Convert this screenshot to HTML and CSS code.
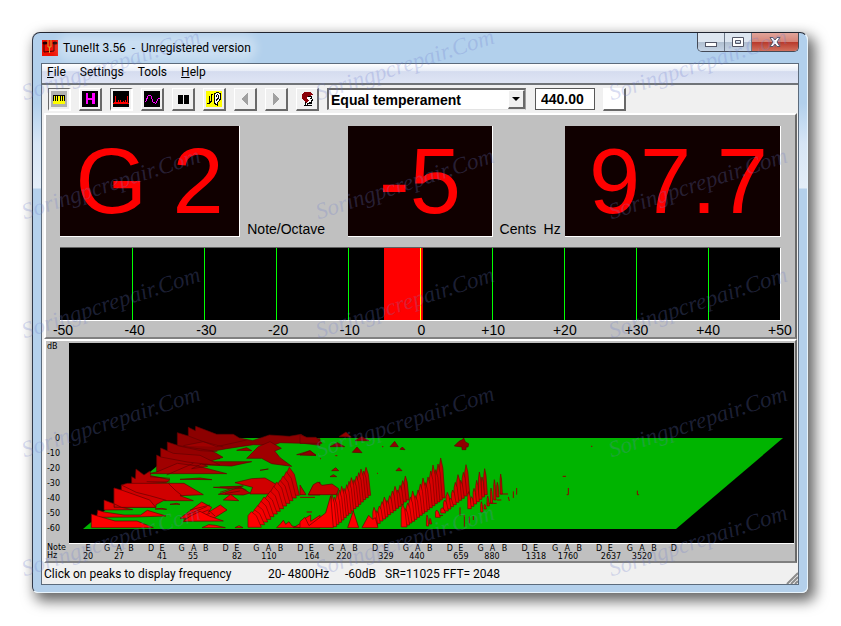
FILE: index.html
```html
<!DOCTYPE html>
<html lang="en">
  <head>
    <meta charset="UTF-8" />
    <meta name="viewport" content="width=device-width, initial-scale=1" />
    <title>Tune!It 3.56</title>
    <link rel="stylesheet" href="styles.css">
  </head>
  <body>
    <div class="window">
      <header class="titlebar">
        <svg class="app-icon" viewBox="0 0 16 16">
          <rect width="16" height="16" fill="#f01000" />
          <path d="M2 3v9l10-1V3" fill="none" stroke="#400" />
          <ellipse cx="3" cy="3" rx="2.500" ry="1.500" fill="#200" />
          <ellipse cx="13" cy="3" rx="2.500" ry="1.500" fill="#200" />
          <path d="M6 0v7h3V0M7.500 7v6" fill="none" stroke="#d0a030" />
        </svg>
        <h1>Tune!It 3.56 &nbsp;- &nbsp;Unregistered version</h1>
        <div class="window-buttons">
          <button type="button" aria-label="Minimize">
            <svg width="12" height="12"><rect x="0.5" y="6.5" width="11" height="4" fill="#fff" stroke="#535666" /></svg>
          </button>
          <button type="button" aria-label="Maximize">
            <svg width="12" height="12"><path fill="#fff" stroke="#535666" fill-rule="evenodd" d="M.5 1.500h11v9H.5zM3.500 4.500h5v3h-5z" /></svg>
          </button>
          <button type="button" class="close" aria-label="Close">
            <svg width="12" height="12"><path d="M1 1.500h3l2 2.500 2-2.500h3L8 6l3 4.500H8L6 8l-2 2.500H1L4 6z" fill="#fff" stroke="#535666" /></svg>
          </button>
        </div>
      </header>

      <main class="client">
        <nav class="menubar">
          <a href="#file"><u>F</u>ile</a>
          <a href="#settings">Settings</a>
          <a href="#tools">Tools</a>
          <a href="#help"><u>H</u>elp</a>
        </nav>

        <div class="toolbar">
          <div class="tools">
            <button type="button" class="tool pressed" aria-label="Keyboard">
              <svg viewBox="0 0 16 16"><path fill="#b0b0b0" d="M0 0h16v16H0z" /><path fill="#ff0" d="M2 4h12v9H2z" /><path d="M2 4h12v1H2zM4 4h1v6H4zM6 4h1v6H6zM9 4h1v6H9zM11 4h1v6h-1zM2 4h1v6H2zM13 4h1v6h-1z" /></svg>
            </button>
            <button type="button" class="tool" aria-label="Harmonics">
              <svg viewBox="0 0 16 16"><path d="M0 0h16v16H0z" /><path fill="#f0f" d="M4 2h2v5h4V2h3v11h-3V9H6v4H4z" /></svg>
            </button>
            <button type="button" class="tool pressed" aria-label="Spectrum">
              <svg viewBox="0 0 16 16"><path d="M0 0h16v16H0z" /><path fill="#f00" d="M0 13v-1h1v-1h1V5h1v6h2V9h1v2h1V9h1v2h2v-1h1v1h1V9h1v2h1V5h1v7h1v1z" /></svg>
            </button>
            <button type="button" class="tool" aria-label="Waveform">
              <svg viewBox="0 0 16 16"><path d="M0 0h16v16H0z" /><path fill="none" stroke="#f0f" d="M1 10h1l2-5 1-1h1l1 1 2 6 2 1h1l2-4 1-1h1" /></svg>
            </button>
            <button type="button" class="tool" aria-label="Pause">
              <svg viewBox="0 0 16 16"><path d="M3 4h5v9H3zM9 4h5v9H9z" /></svg>
            </button>
            <button type="button" class="tool" aria-label="Listen">
              <svg viewBox="0 0 16 16"><path fill="#ff0" d="M0 0h16v16H0z" /><path fill="none" stroke="#000" d="M1 12h2V9m2-6v7M3 5v4m2-6l2 1M3 12l3-2" /><path fill="#fff" stroke="#000" d="M8 6c0-6 7-6 7 0 0 4-4 3-4 8L8 12l1-4z" /><path fill="none" stroke="#000" d="M10 6c0-3 3-3 3 0s-3 1-2 4" /></svg>
            </button>
            <button type="button" class="tool" aria-label="Previous">
              <svg viewBox="0 0 16 16"><path fill="#a0a0a0" d="M11 2v12L4 8z" /></svg>
            </button>
            <button type="button" class="tool" aria-label="Next">
              <svg viewBox="0 0 16 16"><path fill="#a0a0a0" d="M5 2v12l7-6z" /></svg>
            </button>
            <button type="button" class="tool" aria-label="Player">
              <svg viewBox="0 0 16 16"><path fill="#fff" stroke="#000" d="M6 5h7l-1 2 2 2-2 1v2H8v2H6V9z" /><path fill="#8b0008" d="M3 3l2-2h7l2 3-4 1-2 1v2l2 1-3 3-2-2-2-2z" /><path stroke="#000" d="M11 7.500h2M10 11.500h3M5 14.500h8" /></svg>
            </button>
          </div>
          <div class="combo">
            <select aria-label="Temperament">
              <option>Equal temperament</option>
            </select>
            <span class="combo-arrow"></span>
          </div>
          <input class="pitch" type="text" value="440.00" aria-label="Reference pitch" />
          <button type="button" class="tool blank" aria-label="Set pitch"></button>
        </div>

        <section class="panel tuner">
          <div class="readouts">
            <output class="readout">G 2</output>
            <div class="units"><span>Note/Octave</span></div>
            <output class="readout">-5</output>
            <div class="units"><span>Cents</span><span>Hz</span></div>
            <output class="readout hertz">97.7</output>
          </div>
          <svg class="meter" id="meter"></svg>
          <div class="meter-labels">
            <span>-50</span><span>-40</span><span>-30</span><span>-20</span><span>-10</span><span>0</span><span>+10</span><span>+20</span><span>+30</span><span>+40</span><span>+50</span>
          </div>
        </section>

        <section class="panel spectrum">
          <div class="db-scale">
            <span class="db-title">dB</span>
            <span>0</span><span>-10</span><span>-20</span><span>-30</span><span>-40</span><span>-50</span><span>-60</span>
          </div>
          <svg class="plot" viewBox="0 0 725 200" preserveAspectRatio="none">
            <path fill="#00b400" d="M14 186L121 95H714L607 186z" />
            <!-- low frequencies, back to front -->
            <g transform="translate(-29 77) scale(0.33333)" stroke="#600000" stroke-width="2">
              <path fill="#8c0000" d="M412 115V38l33 10V22l21 10 1-13 63 24h50l18 11 40 8 50-17 60 4 35-6 20 13h37v20l-50-6-70-2-20 8-60-2-80 12-45 8 25 22z" />
              <path fill="#940000" d="M382 130V66l30 10 35 6 68 10 34 20-44 13h130l-60 13z" />
              <path fill="#a00000" d="M620 115l35-35 35-15 34 20-20 8 16 20 35 26-60-8-30-16z" />
              <path fill="#a00000" d="M350 155v-50l12 6V84l38 16 80 6 60 29-42-2-60 12z" />
              <path fill="#a00000" d="M770 104l40-12 18 14zM590 91l30-8 15 9zM430 77l60-12 60 16" />
              <path fill="#ac0000" d="M325 161l25-5 62-26 60 8 88 23zM455 146l30-14 18 7zM660 151l25-4z" />
              <path fill="#b80000" d="M275 192v-22l11 6 2-29 24 18 18-12 2 14 58 12-10 8-80 5z" />
              <path fill="#b80000" d="M420 178l60-4 36 5zM520 202l90-4-40 8zM535 223l65-22 30 18-20 6z" />
              <path fill="#d00000" d="M222 262v-58l22 10v-19l18-5h170l58 34-70 3 40 15h-90l-22 12v8zM585 188l50-12 40-2 35 20-25 28h-55l8-20z" />
              <path fill="none" d="M244 195l45 22 40 10 50 14M385 190l20 20 20 16M380 165l80-35M362 111l80 15 70 8M412 77l70 15 50 3M445 48l85 32 90-20" />
              <path fill="none" d="M330 170l60 5m-70 10l70 1m150 15h60l20 10m-80 6l30-10 35-2m-50 16l45-8" />
              <path fill="#e00000" d="M192 270v-30l32 12 20 10 34 7zM222 262h125l-18-22-85-30-22-6zM390 253l20-3 10 3zM345 267l20-2 15 3zM550 240l22-17 24 19z" />
              <path fill="#f00000" d="M170 292l3-22 19 6 60 9h50l20-14 56 17-90 3zM420 295l65-49 30 16-10 15 36-22 20 15-40 25z" />
              <path fill="none" d="M430 300l75-30 20 18M450 270l60-15m-70 30l60-25m-70 45l80-25" />
              <path fill="red" d="M154 323v-41l22 7 49 14h66l49 20zM430 304l20-15 30-15 30 15 40 14zM486 323l20-9 20 2 30 7zM585 323l12-6 12 6z" />
              <path fill="red" d="M710 323l12-12 8-10 7 12 10-8 9 13 24 5zM760 323l20-12 20-19 12-7v19l28-18v38z" />
              <path fill="#c00000" d="M805 225l14-27 21-12v39z" />
            </g>
            <!-- scattered partials -->
            <g transform="translate(231 77) scale(0.33333)" stroke="#600000" stroke-width="2" fill="#900000">
              <path d="M0 44l20 8h28l18 18H0zM0 105l30-13 18 14zM117 50l21-14 16 15zM90 80l22-12 22 12zM165 62l20-12 22 12zM157 97l14-16 15 17zM270 80l14-16 11 16zM300 88l7-7 8 8zM463 78l14-14 10-5 4-5 5 12 10 5-2 10h-6v8h-12v-8z" />
              <path fill="#b00000" d="M95 152l12-9 9 9zM90 170l10-6 10 6zM288 152l9-9 9 9z" />
              <path fill="#c80000" d="M25 224l15-30 14-8 12 10 30-4 20 14-6 18zM0 195l18 29H0z" />
              <path fill="none" stroke="#900000" stroke-width="3" d="M0 232h45M20 276h16M788 169h10M805 204v20h-5M1012 212v12h5M873 79h4M60 116h3M106 107h6M246 80h4M231 160h3M628 243l-3-12M640 234v-20M650 224v-20M600 222h24M590 240h14M560 250h30M480 262v25M493 320v-35M508 310v-20M520 300v-12" />
              <g id="ridges"></g>
              <path fill="red" d="M0 323v-18l15-13 12 25 50-38 15-52 8 96zM143 323l17-50 16 50zM186 323l20-37 12 12 8-5 8 30z" />
            </g>
          </svg>
          <div class="axis-names"><span>Note</span><span>Hz</span></div>
          <svg class="axis" id="axis"></svg>
        </section>

        <footer class="statusbar">
          <span class="hint">Click on peaks to display frequency</span>
          <span class="range">20- 4800Hz</span>
          <span class="floor">-60dB</span>
          <span class="rate">SR=11025</span>
          <span>FFT= 2048</span>
          <svg class="grip" width="12" height="12"><path d="M1 12L12 1M5 12l7-7M9 12l3-3" stroke="#8c8c8c" stroke-width="2" /></svg>
        </footer>
      </main>
    </div>

    <div class="watermarks" id="watermarks"></div>
    <script src="script.js"></script>
  </body>
</html>
```
FILE: styles.css
```css
* {
  box-sizing: border-box;
}

body {
  margin: 0;
  min-height: 100vh;
  padding: 32px 33px 33px 32px;
  display: flex;
  background: #fff;
  color: #000;
  font-family: Roboto, "Noto Sans", sans-serif;
  font-size: 12px;
  position: relative;
  overflow: hidden;
}

button,
input,
select {
  font: inherit;
  color: inherit;
  margin: 0;
  padding: 0;
  border-radius: 0;
}

.window {
  flex: 1;
  min-width: 0;
  display: flex;
  flex-direction: column;
  padding: 0 8px 7px;
  border: 1px solid #e8f4fc;
  border-top-color: #202430;
  border-left-color: #303848;
  border-radius: 8px 8px 6px 6px;
  background: linear-gradient(#b2d0ec 0, #b2d0ec 70px, #d6e5f5 110px, #e4eef8 155px, #b4d0eb 156px);
  box-shadow: 5px 6px 14px 2px rgba(0, 0, 0, 0.6);
}

.titlebar {
  height: 30px;
  display: flex;
  align-items: center;
}

.app-icon {
  width: 16px;
  height: 16px;
  margin: 0 5px 0 1px;
}

.titlebar h1 {
  margin: 0;
  font-size: 12px;
  font-weight: normal;
  line-height: 14px;
  white-space: nowrap;
  border-radius: 10px;
  background: rgba(255, 255, 255, 0.3);
  box-shadow: 0 0 8px 6px rgba(255, 255, 255, 0.3);
}

.window-buttons {
  align-self: flex-start;
  display: flex;
  margin-left: auto;
  border: 1px solid #444a56;
  border-top: 0;
  border-radius: 0 0 5px 5px;
  overflow: hidden;
}

.window-buttons button {
  width: 27px;
  height: 18px;
  display: flex;
  align-items: center;
  justify-content: center;
  border: 0;
  border-right: 1px solid #6c7888;
  background: linear-gradient(#dde6f0 50%, #b0bfd0 50%, #c5d4e5);
}

.window-buttons .close {
  width: 46px;
  border-right: 0;
  background: linear-gradient(#e0a49a 0, #d58376 50%, #b8382a 50%, #d0705c);
}

.client {
  flex: 1;
  display: flex;
  flex-direction: column;
  border: 1px solid #5c6b7c;
  background: #f0f0f0;
}

.menubar {
  height: 21px;
  display: flex;
  gap: 14px;
  padding-left: 5px;
  line-height: 17px;
  border-bottom: 2px solid #707478;
  background: linear-gradient(#fff, #e8edf7 35%, #d5dcef 40%, #dfe5f5);
}

.menubar a {
  color: #000;
  text-decoration: none;
}

.toolbar {
  height: 28px;
  display: flex;
  align-items: center;
  padding: 0 6px;
}

.tools {
  display: flex;
  gap: 8px;
}

.tool {
  width: 23px;
  height: 23px;
  display: flex;
  align-items: center;
  justify-content: center;
  border: 1px solid #fff;
  border-right: 2px solid #696969;
  border-bottom: 2px solid #696969;
  background: #f0f0f0;
}

.tool.pressed {
  border: 2px solid #fff;
  border-top: 1px solid #696969;
  border-left: 1px solid #696969;
}

.tool svg {
  width: 16px;
  height: 16px;
  shape-rendering: crispEdges;
}

.tool.blank {
  margin-left: 8px;
  background: #fff;
}

.combo {
  position: relative;
  width: 199px;
  height: 22px;
  margin: 0 9px 0 8px;
}

.combo select {
  appearance: none;
  width: 100%;
  height: 100%;
  padding-left: 2px;
  border: 2px solid #696969;
  border-right: 1px solid #a0a0a0;
  border-bottom: 1px solid #e3e3e3;
  background: #fff;
  font: bold 14px "Liberation Sans", sans-serif;
}

.combo-arrow {
  position: absolute;
  top: 2px;
  right: 1px;
  width: 17px;
  height: 19px;
  display: grid;
  place-items: center;
  border: 1px solid #fff;
  border-right: 2px solid #696969;
  border-bottom: 2px solid #696969;
  background: #f0f0f0;
  pointer-events: none;
}

.combo-arrow::before {
  content: "";
  border: 4px solid transparent;
  border-top-color: #000;
  border-bottom: 0;
}

.pitch {
  width: 60px;
  height: 22px;
  padding-left: 5px;
  border: 1px solid #585858;
  background: #fff;
  font: bold 14px "Liberation Sans", sans-serif;
}

.panel {
  margin: 0 1px 0 2px;
  border: 2px solid #fff;
  border-right: 2px solid #696969;
  border-bottom: 2px solid #808080;
  background: #c0c0c0;
  font-family: "Liberation Sans", sans-serif;
}

.tuner {
  padding: 11px 14px 0;
  font-size: 14px;
}

.readouts {
  display: grid;
  grid-template-columns: 180fr 108fr 144fr 72fr 216fr;
  height: 111px;
}

.readout {
  display: flex;
  align-items: center;
  justify-content: center;
  border-right: 1px solid #fff;
  border-bottom: 1px solid #fff;
  background: #100000;
  color: #f00;
  font: 92px "Liberation Sans Narrow", "Liberation Sans", sans-serif;
  line-height: 100px;
  white-space: pre;
}

.readout.hertz {
  justify-content: flex-end;
  padding-right: 12px;
}

.units {
  display: flex;
  align-items: flex-end;
  justify-content: space-between;
  padding: 0 4px 0 7px;
}

.meter {
  display: block;
  width: 100%;
  height: 74px;
  margin-top: 10px;
  border-top: 1px solid #606060;
  border-right: 1px solid #fff;
  border-bottom: 1px solid #fff;
  background: #000;
}

.meter-labels {
  display: flex;
  justify-content: space-between;
  height: 16px;
  margin: 0 -11px 0 -9px;
  line-height: 18px;
}

.meter-labels span {
  width: 24px;
  text-align: center;
}

.spectrum {
  flex: 1;
  display: grid;
  grid-template-columns: 23px 1fr;
  grid-template-rows: 1fr 17px;
  padding: 2px 1px 0 0;
  font: 8px "DejaVu Sans", sans-serif;
}

.db-scale {
  display: flex;
  flex-direction: column;
  justify-content: flex-end;
  padding: 0 9px 8px 0;
  text-align: right;
  line-height: 15px;
}

.db-title {
  margin: -4px auto auto 1px;
}

.plot {
  width: 100%;
  height: 100%;
  min-height: 200px;
  border-bottom: 1px solid #fff;
  background: #000;
}

.axis-names {
  display: flex;
  flex-direction: column;
  padding-left: 1px;
  line-height: 8px;
}

.axis {
  width: 100%;
  height: 17px;
}

.axis text {
  text-anchor: middle;
}

.statusbar {
  height: 21px;
  display: flex;
  align-items: center;
  padding-left: 2px;
  white-space: pre;
}

.hint {
  flex: 0 0 224px;
}

.range {
  flex: 0 0 77px;
}

.floor {
  flex: 0 0 40px;
}

.rate {
  flex: 0 0 58px;
}

.grip {
  align-self: flex-end;
  margin-left: auto;
}

.watermarks {
  position: absolute;
  top: 32px;
  left: 16px;
  right: 44px;
  display: grid;
  grid-template-columns: repeat(3, 1fr);
  grid-auto-rows: 119px;
  column-gap: 100px;
  pointer-events: none;
}

.watermarks span {
  width: 190px;
  height: 66px;
  display: flex;
  align-items: center;
  justify-content: center;
  transform: rotate(-18deg);
  color: rgba(110, 125, 205, 0.26);
  font: italic 23px "Liberation Serif", serif;
}
```
FILE: script.js
```js
const SVG_NS = "http://www.w3.org/2000/svg";

function add(parent, name, attrs, text) {
  const el = document.createElementNS(SVG_NS, name);
  for (const key in attrs) el.setAttribute(key, attrs[key]);
  if (text) el.textContent = text;
  parent.appendChild(el);
}

// Cents meter: red bar from the reading to zero, a line every 10 cents
const meter = document.getElementById("meter");
add(meter, "rect", { x: "45%", y: 0, width: "5.4%", height: "100%", fill: "#f00" });
for (let cents = -40; cents <= 40; cents += 10) {
  add(meter, "rect", {
    x: cents + 50 + "%",
    y: 0,
    width: 1,
    height: "100%",
    fill: cents === 0 ? "#ff0" : "#0f0",
  });
}

// Frequency axis
const PLOT_WIDTH = 725;
const axis = document.getElementById("axis");
const percent = (x) => (x / PLOT_WIDTH) * 100 + "%";

add(axis, "text", { x: percent(19), y: 7 }, "E");
for (let octave = 0; octave < 8; octave++) {
  const start = 38 + octave * 74.7;
  const notes = { G: 0, A: 12, B: 24, D: 44, E: 55 };
  for (const note in notes) {
    if (octave === 7 && note === "E") continue;
    add(axis, "text", { x: percent(start + notes[note]), y: 7 }, note);
  }
}

const hertz = {
  20: 19, 27: 50, 41: 93, 55: 124, 82: 168, 110: 200, 164: 243, 220: 275,
  329: 317, 440: 348, 659: 392, 880: 423, 1318: 467, 1760: 499, 2637: 542, 3520: 573,
};
for (const hz in hertz) {
  add(axis, "text", { x: percent(hertz[hz]), y: 15 }, hz);
}

// Ridges of harmonics, drawn from the back row to the front
// [front x, back x, front top, back top, front base, back base, rows, width, jitter]
const ridges = [
  [-146, -32, 275, 142, 322, 226, 13, 30, 2],
  [96, 198, 225, 134, 320, 226, 15, 14, 4],
  [222, 316, 262, 168, 316, 240, 13, 11, 6],
  [308, 422, 252, 106, 321, 234, 16, 13, 8],
  [381, 390, 285, 295, 318, 312, 2, 5, 0],
  [410, 498, 270, 124, 292, 222, 12, 11, 10],
  [506, 554, 215, 126, 266, 224, 7, 8, 10],
  [544, 602, 245, 146, 276, 222, 7, 5, 8],
];
const group = document.getElementById("ridges");
for (const [x0, x1, t0, t1, b0, b1, rows, width, jitter] of ridges) {
  for (let i = rows - 1; i >= 0; i--) {
    const k = i / (rows - 1);
    const x = Math.round(x0 + (x1 - x0) * k);
    const top = Math.round(t0 + (t1 - t0) * k + ((i * 7) % 4) * jitter);
    const base = Math.round(b0 + (b1 - b0) * k);
    const red = Math.round(255 - 50 * k);
    const drop = Math.round((base - top) * 0.25);
    add(group, "path", {
      d: `M${x - width / 3} ${base}V${top + drop}L${x} ${top}L${x + width / 2} ${top + drop}L${x + width} ${base}z`,
      fill: `rgb(${red},0,0)`,
      stroke: "#780000",
    });
  }
}

const watermarks = document.getElementById("watermarks");
for (let i = 0; i < 15; i++) {
  const mark = document.createElement("span");
  mark.textContent = "Soringpcrepair.Com";
  watermarks.appendChild(mark);
}
```
